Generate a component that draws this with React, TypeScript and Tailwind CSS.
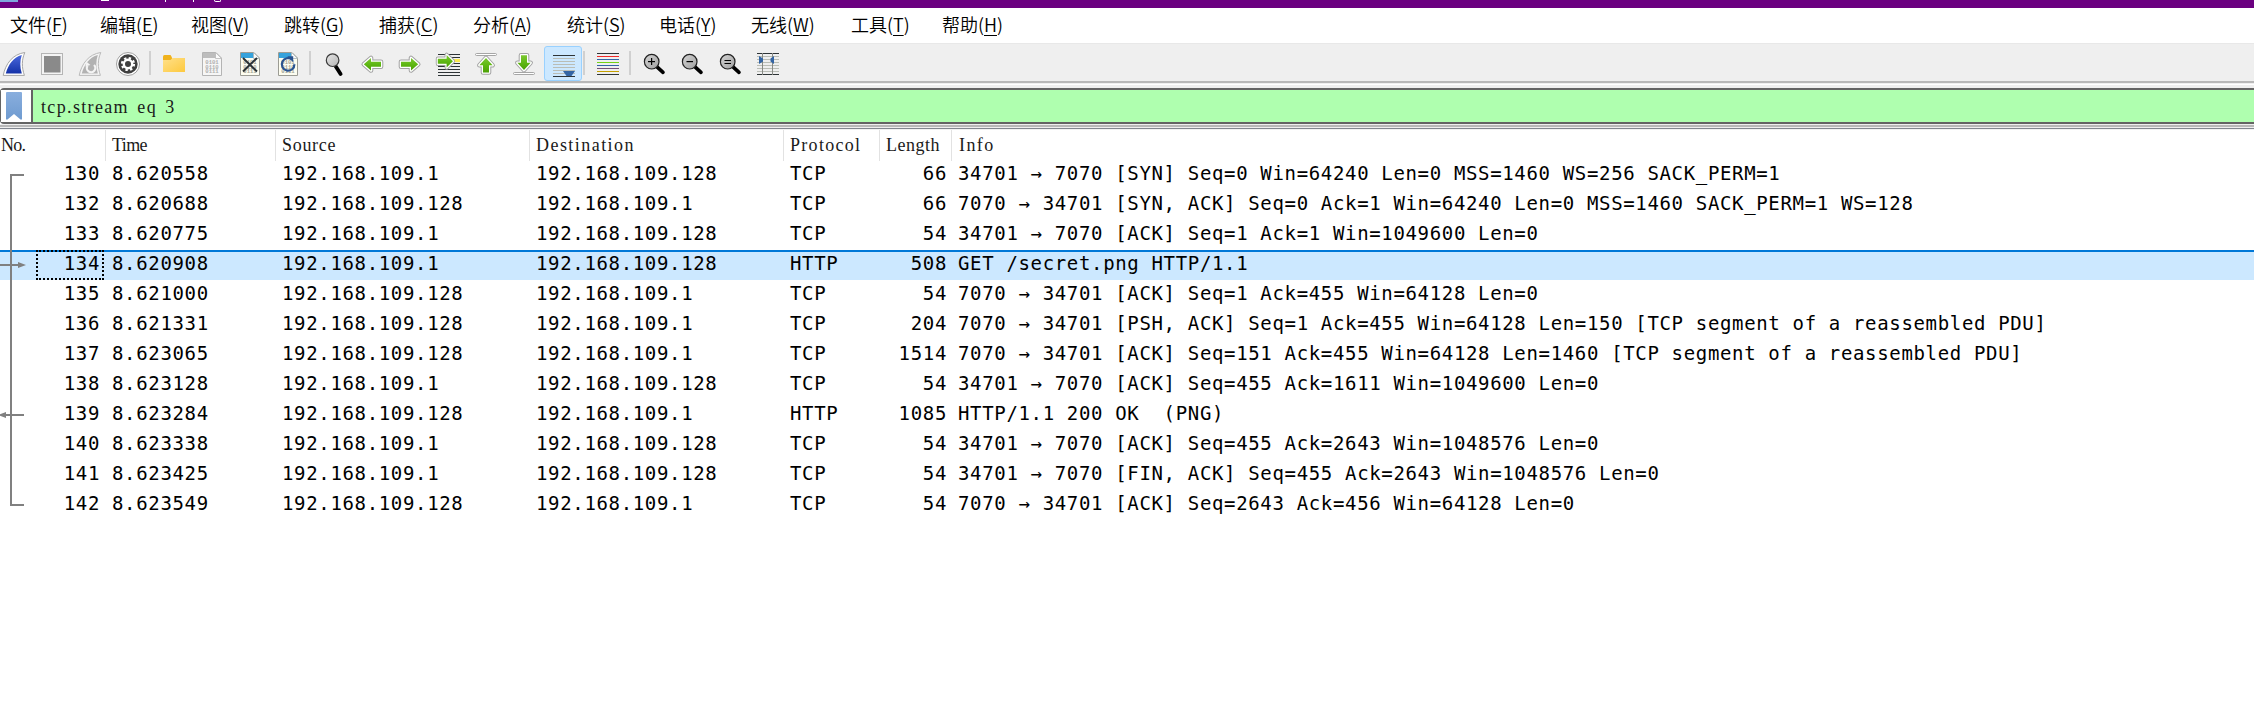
import React from "react";

const MENUS = [
  { label: "文件", key: "F", box: "w-[90px]" },
  { label: "编辑", key: "E", box: "w-[91px]" },
  { label: "视图", key: "V", box: "w-[93px]" },
  { label: "跳转", key: "G", box: "w-[95px]" },
  { label: "捕获", key: "C", box: "w-[94px]" },
  { label: "分析", key: "A", box: "w-[94px]" },
  { label: "统计", key: "S", box: "w-[92px]" },
  { label: "电话", key: "Y", box: "w-[92px]" },
  { label: "无线", key: "W", box: "w-[100px]" },
  { label: "工具", key: "T", box: "w-[91px]" },
  { label: "帮助", key: "H", box: "w-[91px]" },
];

type Packet = [string, string, string, string, string, string, string];

const A = "192.168.109.1";
const B = "192.168.109.128";

const PACKETS: Packet[] = [
  ["130", "8.620558", A, B, "TCP", "66", "34701 → 7070 [SYN] Seq=0 Win=64240 Len=0 MSS=1460 WS=256 SACK_PERM=1"],
  ["132", "8.620688", B, A, "TCP", "66", "7070 → 34701 [SYN, ACK] Seq=0 Ack=1 Win=64240 Len=0 MSS=1460 SACK_PERM=1 WS=128"],
  ["133", "8.620775", A, B, "TCP", "54", "34701 → 7070 [ACK] Seq=1 Ack=1 Win=1049600 Len=0"],
  ["134", "8.620908", A, B, "HTTP", "508", "GET /secret.png HTTP/1.1"],
  ["135", "8.621000", B, A, "TCP", "54", "7070 → 34701 [ACK] Seq=1 Ack=455 Win=64128 Len=0"],
  ["136", "8.621331", B, A, "TCP", "204", "7070 → 34701 [PSH, ACK] Seq=1 Ack=455 Win=64128 Len=150 [TCP segment of a reassembled PDU]"],
  ["137", "8.623065", B, A, "TCP", "1514", "7070 → 34701 [ACK] Seq=151 Ack=455 Win=64128 Len=1460 [TCP segment of a reassembled PDU]"],
  ["138", "8.623128", A, B, "TCP", "54", "34701 → 7070 [ACK] Seq=455 Ack=1611 Win=1049600 Len=0"],
  ["139", "8.623284", B, A, "HTTP", "1085", "HTTP/1.1 200 OK  (PNG)"],
  ["140", "8.623338", A, B, "TCP", "54", "34701 → 7070 [ACK] Seq=455 Ack=2643 Win=1048576 Len=0"],
  ["141", "8.623425", A, B, "TCP", "54", "34701 → 7070 [FIN, ACK] Seq=455 Ack=2643 Win=1048576 Len=0"],
  ["142", "8.623549", B, A, "TCP", "54", "7070 → 34701 [ACK] Seq=2643 Ack=456 Win=64128 Len=0"],
];

const SELECTED = "134";
const COLS = "grid grid-cols-[106px_170px_254px_254px_96px_72px_1fr]";

const HEADERS = [
  { text: "No.", cls: "pl-[1px] tracking-[-0.8px]" },
  { text: "Time", cls: "pl-[6px] tracking-[-0.6px]" },
  { text: "Source", cls: "pl-[6px] tracking-[0.7px]" },
  { text: "Destination", cls: "pl-[6px] tracking-[1.45px]" },
  { text: "Protocol", cls: "pl-[6px] tracking-[1.3px]" },
  { text: "Length", cls: "pl-[6px] tracking-[0.5px]" },
  { text: "Info", cls: "pl-[7px] tracking-[1.4px]" },
];

function Icon({ children }: { children: React.ReactNode }) {
  return (
    <svg width="26" height="26" viewBox="0 0 26 26" className="block overflow-visible">
      {children}
    </svg>
  );
}

function Tool({ children, active = false }: { children: React.ReactNode; active?: boolean }) {
  return (
    <button
      className={
        "flex h-[35px] w-[38px] shrink-0 items-start justify-center rounded-[3px] border pt-1 " +
        (active ? "-mr-px ml-px border-[#99d1ff] bg-[#cce8ff]" : "border-transparent")
      }
    >
      <Icon>{children}</Icon>
    </button>
  );
}

function Sep() {
  return (
    <div className="w-2 shrink-0 pl-[2px] pt-[5px]">
      <div className="h-6 w-[2px] bg-[#d0d0d0]" />
    </div>
  );
}

const FIN = "M2.2 24.4C4.5 13 11.5 3.2 23.8 1.5C20.6 9 20.6 16 23.4 24.4Z";
const FIN_IN = "M4.8 22.4C7.2 13.5 12.5 6 20.8 3.9C18.8 10 18.8 16 20.8 22.4Z";

function Doc({ live, children }: { live?: boolean; children?: React.ReactNode }) {
  return (
    <>
      <path d="M3.5 1.5H17L22.5 7V24.5H3.5Z" fill={live ? "#fdfdf0" : "#f6f6f6"} stroke={live ? "#9c9c94" : "#b4b4b4"} />
      <path d="M4 2H17V7H4Z" fill={live ? "#35a2dc" : "#bdbdbd"} />
      <path d="M16.500 1.500L22.500 7.500H16.500Z" fill="#fafafa" stroke={live ? "#a8b4b8" : "#b8b8b8"} strokeWidth="0.8" />
      <g fontFamily="Liberation Mono, monospace" fontSize="5.6" fontWeight="700" fill={live ? "#a3a397" : "#b0b0b0"}>
        <text x="6.300" y="13">0101</text>
        <text x="6.300" y="17.600">0110</text>
        <text x="6.300" y="22.200">0111</text>
      </g>
      {children}
    </>
  );
}

function Arrow({ d }: { d: string }) {
  return (
    <>
      <path d={d} fill="none" stroke="#a2a2a2" strokeWidth="4.600" strokeLinejoin="round" />
      <path d={d} fill="url(#green)" stroke="#fff" strokeWidth="2.600" strokeLinejoin="round" />
      <path d={d} fill="url(#green)" />
    </>
  );
}

const LEFT = "M4.8 13.200L12 7V10.800H22V15.800H12V19.400Z";
const RIGHT = "M21.200 13.200L14 7V10.800H4V15.800H14V19.400Z";
const UP = "M13 7L19.600 14.200H16V21.500H10V14.200H6.400Z";
const DOWN = "M13 19L19.600 11.800H16V4.200H10V11.800H6.400Z";

function Rule({ y, c = "#2e3436", x = 2, w = 22 }: { y: number; c?: string; x?: number; w?: number }) {
  return <rect x={x} y={y} width={w} height="1" fill={c} />;
}

function Lens({ children }: { children: React.ReactNode }) {
  return (
    <>
      <path d="M16 15.800L22 21.300" stroke="#000" strokeWidth="3.600" strokeLinecap="round" />
      <circle cx="10.700" cy="10.700" r="7.300" fill="url(#lens)" stroke="#222" strokeWidth="1.200" />
      <g fill="#000">{children}</g>
    </>
  );
}

function Toolbar() {
  return (
    <div className="-ml-[5px] flex h-[35px] items-start">
      <Tool>
        <path d={FIN} fill="#fff" stroke="#a5a5a5" />
        <path d={FIN_IN} fill="url(#blue)" />
      </Tool>
      <Tool>
        <rect x="2.500" y="2.500" width="21" height="21" fill="#f4f4f4" stroke="#b5b5b5" />
        <rect x="5" y="5" width="16.500" height="16.500" fill="#8a8a8a" />
      </Tool>
      <Tool>
        <path d={FIN} fill="#f4f4f4" stroke="#bababa" />
        <path d={FIN_IN} fill="#b2b2b2" />
        <path d="M10.500 14.800A4.200 4.200 0 1 0 17 14" fill="none" stroke="#f4f4f4" strokeWidth="2.200" />
        <path d="M8.300 15.500L9.500 10.800L13.400 14Z" fill="#f4f4f4" />
      </Tool>
      <Tool>
        <circle cx="13" cy="13" r="11.500" fill="#fff" stroke="#a0a0a0" />
        <circle cx="13" cy="13" r="9.700" fill="#3f3f3f" />
        <circle cx="13" cy="13" r="5.900" fill="none" stroke="#fff" strokeWidth="2.400" strokeDasharray="2.317 2.317" />
        <circle cx="13" cy="13" r="4.200" fill="none" stroke="#fff" strokeWidth="2.400" />
      </Tool>
      <Sep />
      <Tool>
        <path d="M2 5.500Q2 4 3.500 4H9.500L11 6.500V11H2Z" fill="#f0b21c" />
        <path d="M2 9H9.500L11.500 7H24V20.500Q24 21 23.500 21H2.500Q2 21 2 20.500Z" fill="url(#folder)" />
      </Tool>
      <Tool><Doc /></Tool>
      <Tool>
        <Doc live>
          <path d="M6 7L20 20.500M20 7L6 20.500" stroke="#2b3236" strokeWidth="2" />
        </Doc>
      </Tool>
      <Tool>
        <Doc live>
          <path d="M17.200 8.600A6.300 6.300 0 1 0 19.400 13.200" fill="none" stroke="#2a5390" strokeWidth="2.200" />
          <path d="M12.300 5.200H18.200V11.200Z" fill="#2a5390" />
        </Doc>
      </Tool>
      <Sep />
      <Tool>
        <path d="M14.500 15L19.600 23" stroke="#000" strokeWidth="3.800" strokeLinecap="round" />
        <circle cx="11.600" cy="9.200" r="6.300" fill="url(#glass)" stroke="#3a3a3a" strokeWidth="1.200" />
      </Tool>
      <Tool><Arrow d={LEFT} /></Tool>
      <Tool><Arrow d={RIGHT} /></Tool>
      <Tool>
        <Rule x={3} y={3} /><Rule x={3} y={6} /><Rule x={3} y={12} /><Rule x={3} y={15} />
        <Rule x={3} y={18} /><Rule x={3} y={21} /><Rule x={3} y={24} />
        <rect x="18" y="8" width="7" height="3" fill="#fce94f" />
        <g transform="translate(-0.700 -3) scale(0.880 1)"><Arrow d={RIGHT} /></g>
      </Tool>
      <Tool>
        <rect x="2.500" y="2.500" width="21" height="2" fill="#fff" stroke="#9c9c9c" strokeWidth="0.900" rx="1" />
        <Arrow d={UP} />
      </Tool>
      <Tool>
        <rect x="2.500" y="21.500" width="21" height="2" fill="#fff" stroke="#9c9c9c" strokeWidth="0.900" rx="1" />
        <Arrow d={DOWN} />
      </Tool>
      <Tool active>
        <Rule x={3} y={4} />
        {[7, 10, 13, 16, 19, 22].map((y) => <Rule key={y} x={3} y={y} c="#babdb6" />)}
        <Rule x={3} y={25} />
        <path d="M13 20H25L21.500 25H16.500Z" fill="#3465a4" />
      </Tool>
      <Sep />
      <Tool>
        {["#2e3436", "#ef2929", "#3465a4", "#73d216", "#3465a4", "#75507b", "#c4a000", "#2e3436"].map((c, i) => (
          <Rule key={i} y={2 + i * 3} c={c} />
        ))}
      </Tool>
      <Sep />
      <Tool>
        <Lens><rect x="7" y="10" width="7" height="1.200" /><rect x="10" y="7" width="1.200" height="7" /></Lens>
      </Tool>
      <Tool>
        <Lens><rect x="7.500" y="10" width="6.500" height="1.200" /></Lens>
      </Tool>
      <Tool>
        <Lens><rect x="7.500" y="9" width="6.500" height="1" /><rect x="7.500" y="12" width="6.500" height="1" /></Lens>
      </Tool>
      <Tool>
        <Rule y={2} />
        {[5, 8, 11, 14, 17, 20].map((y) => <Rule key={y} y={y} c="#babdb6" />)}
        <Rule y={23} />
        <rect x="7" y="2" width="1" height="22" fill="#888a85" />
        <rect x="17" y="2" width="1" height="22" fill="#888a85" />
        <path d="M4 5L8 7.500V10.500L4 13Z" fill="#3465a4" />
        <path d="M19 5L15.500 7.500V10.500L19 13Z" fill="#3465a4" />
      </Tool>
    </div>
  );
}

function Gradients() {
  return (
    <svg width="0" height="0" className="absolute">
      <defs>
        <linearGradient id="green" x1="0" y1="0" x2="0" y2="1">
          <stop offset="0" stopColor="#7cc832" /><stop offset="0.500" stopColor="#5fb813" /><stop offset="1" stopColor="#4ca005" />
        </linearGradient>
        <linearGradient id="blue" x1="0" y1="0" x2="0" y2="1">
          <stop offset="0" stopColor="#4a68dc" /><stop offset="1" stopColor="#1432a8" />
        </linearGradient>
        <linearGradient id="folder" x1="0" y1="0" x2="1" y2="1">
          <stop offset="0" stopColor="#ffe08a" /><stop offset="1" stopColor="#fdc93e" />
        </linearGradient>
        <linearGradient id="lens" x1="0" y1="0" x2="1" y2="1">
          <stop offset="0" stopColor="#d4d4d4" /><stop offset="1" stopColor="#a0a0a0" />
        </linearGradient>
        <linearGradient id="glass" x1="0" y1="0" x2="1" y2="1">
          <stop offset="0" stopColor="#e6e6e6" /><stop offset="1" stopColor="#b4b4b4" />
        </linearGradient>
        <linearGradient id="mark" x1="0" y1="0" x2="0" y2="1">
          <stop offset="0" stopColor="#89aede" /><stop offset="1" stopColor="#6f9bd0" />
        </linearGradient>
      </defs>
    </svg>
  );
}

function RelatedPackets() {
  return (
    <svg width="30" height="360" viewBox="0 0 30 360" className="pointer-events-none absolute left-0 top-0">
      <path d="M24 15H11V345H24M0 105H19M24 255H5" fill="none" stroke="#808080" strokeWidth="2" />
      <path d="M18 102L26 105L18 108ZM6 252L-2 255L6 258Z" fill="#808080" />
    </svg>
  );
}

export default function App() {
  return (
    <div className="flex h-[723px] w-full flex-col overflow-hidden bg-white text-black">
      <Gradients />
      <div className="flex h-2 shrink-0 items-start overflow-hidden bg-[#6b0080]">
        <div className="h-[2px] w-[18px] bg-[#7fa6dc]" />
        <div className="ml-[83px] h-px w-2 bg-white" />
        <div className="ml-14 h-[2px] w-px bg-white" />
        <div className="ml-[27px] h-[2px] w-px bg-white" />
        <div className="ml-5 h-[2px] w-[7px] rounded-b-sm border-x border-b border-white" />
      </div>

      <nav className="flex h-[35px] shrink-0 pl-[10px] font-['Noto_Sans_CJK_SC',sans-serif] text-[18px] font-[350] leading-[33px]">
        {MENUS.map((m) => (
          <div key={m.key} className={m.box + " shrink-0 whitespace-nowrap"}>
            {m.label}(<span className="underline decoration-1 underline-offset-[3px]">{m.key}</span>)
          </div>
        ))}
      </nav>

      <div className="h-[38px] shrink-0 border-t border-[#e8e8e8] bg-[#efefef] pt-[2px]">
        <Toolbar />
      </div>
      <div className="h-[2px] shrink-0 bg-[#b8b8b8]" />
      <div className="h-[1px] shrink-0 bg-[#efefef]" />
      <div className="h-[1px] shrink-0 bg-white" />
      <div className="h-[3px] shrink-0 bg-[#efefef]" />

      <div className="flex h-9 shrink-0 rounded-l-[4px] border-y-2 border-l border-[#646464] bg-[#afffaf]">
        <div className="flex w-[32px] shrink-0 justify-start border-r-2 border-[#646464] bg-white pl-[5px] pt-[2px]">
          <svg width="16" height="28" viewBox="0 0 16 28">
            <path d="M0 1Q0 0 1 0H15Q16 0 16 1V27.500H14.500L8 22L1.500 27.500H0Z" fill="url(#mark)" />
          </svg>
        </div>
        <div className="whitespace-pre pl-[8px] font-['Liberation_Serif',serif] text-[18px] leading-[35px] tracking-[1.35px] text-[#1a1a1a] [word-spacing:2.5px]">
          tcp.stream eq 3
        </div>
      </div>
      <div className="h-[1px] shrink-0 bg-[#efefef]" />
      <div className="h-[2px] shrink-0 bg-[#b8b8b8]" />
      <div className="h-[1px] shrink-0 bg-[#efefef]" />
      <div className="h-[1px] shrink-0 bg-[#828790]" />
      <div className="h-[1px] shrink-0 bg-[#f2f2f2]" />

      <div className={COLS + " h-[30px] shrink-0 font-['Liberation_Serif',serif] text-[18px] leading-[31px] text-[#1a1a1a]"}>
        {HEADERS.map((h, i) => (
          <div
            key={h.text}
            className={"whitespace-nowrap " + h.cls + (i < HEADERS.length - 1 ? " border-r border-[#e2e2e2]" : "")}
          >
            {h.text}
          </div>
        ))}
      </div>

      <div className="relative font-['DejaVu_Sans_Mono',monospace] text-[19px] leading-[27px] tracking-[0.656px]">
        {PACKETS.map((p) => {
          const sel = p[0] === SELECTED;
          return (
            <div
              key={p[0]}
              className={
                COLS + " h-[30px] whitespace-pre " +
                (sel ? "bg-[#cce8ff] shadow-[inset_0_2px_0_#0078d7]" : "")
              }
            >
              <div className="pl-[36px] pr-[2px]">
                <div
                  className={
                    "h-[30px] pr-1 text-right " +
                    (sel ? "outline-2 -outline-offset-2 outline-dotted outline-black" : "")
                  }
                >
                  {p[0]}
                </div>
              </div>
              <div className="pl-[6px]">{p[1]}</div>
              <div className="pl-[6px]">{p[2]}</div>
              <div className="pl-[6px]">{p[3]}</div>
              <div className="pl-[6px]">{p[4]}</div>
              <div className="pr-[5px] text-right">{p[5]}</div>
              <div className="pl-[6px]">{p[6]}</div>
            </div>
          );
        })}
        <RelatedPackets />
      </div>
    </div>
  );
}
